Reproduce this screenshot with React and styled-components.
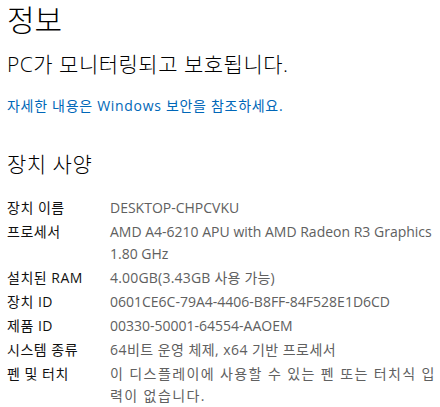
import React from 'react';
import styled, { createGlobalStyle } from 'styled-components';

const GlobalStyle = createGlobalStyle`
  body {
    margin: 0;
    background: #ffffff;
    font-family: "Open Sans", "Noto Sans CJK KR", sans-serif;
    color: #000000;
  }
`

const Page = styled.div`
  padding: 0 0 0 7px;
  width: 440px;
  box-sizing: border-box;
`

const Title = styled.h1`
  margin: 0;
  font-size: 30px;
  font-weight: 300;
  line-height: 40px;
`

const Status = styled.div`
  margin-top: 10px;
  font-size: 21px;
  font-weight: 300;
  letter-spacing: 0.5px;
  line-height: 28px;
`

const Link = styled.a`
  display: block;
  margin-top: 18px;
  font-size: 14px;
  letter-spacing: 0.7px;
  line-height: 20px;
  color: #0067b8;
  text-decoration: none;
`

const Heading = styled.h2`
  margin: 34px 0 0;
  font-size: 21px;
  font-weight: 300;
  letter-spacing: 0.5px;
  line-height: 28px;
`

const Specs = styled.dl`
  margin: 19px 0 0;
  display: grid;
  grid-template-columns: 103px 1fr;
  row-gap: 2px;
`

const Label = styled.dt`
  font-size: 14px;
  letter-spacing: 0.5px;
  line-height: 22px;
  color: #111111;
`

const Value = styled.dd`
  margin: 0;
  font-size: 14px;
  letter-spacing: ${p => p.$spread || 0}px;
  line-height: 22px;
  color: #606060;
  padding-right: 2px;
`

const specs = [
  ['장치 이름', 'DESKTOP-CHPCVKU'],
  ['프로세서', 'AMD A4-6210 APU with AMD Radeon R3 Graphics 1.80 GHz'],
  ['설치된 RAM', '4.00GB(3.43GB 사용 가능)', 0.2],
  ['장치 ID', '0601CE6C-79A4-4406-B8FF-84F528E1D6CD'],
  ['제품 ID', '00330-50001-64554-AAOEM'],
  ['시스템 종류', '64비트 운영 체제, x64 기반 프로세서', 0.45],
  ['펜 및 터치', '이 디스플레이에 사용할 수 있는 펜 또는 터치식 입력이 없습니다.', 1.4],
];

const App = () => {
  return (<Page>
    <GlobalStyle />
    <Title>정보</Title>
    <Status>PC가 모니터링되고 보호됩니다.</Status>
    <Link href="#">자세한 내용은 Windows 보안을 참조하세요.</Link>
    <Heading>장치 사양</Heading>
    <Specs>
      {specs.map(([label, value, spread]) => (
        <React.Fragment key={label}>
          <Label>{label}</Label>
          <Value $spread={spread}>{value}</Value>
        </React.Fragment>
      ))}
    </Specs>
  </Page>);
}

export default App;
